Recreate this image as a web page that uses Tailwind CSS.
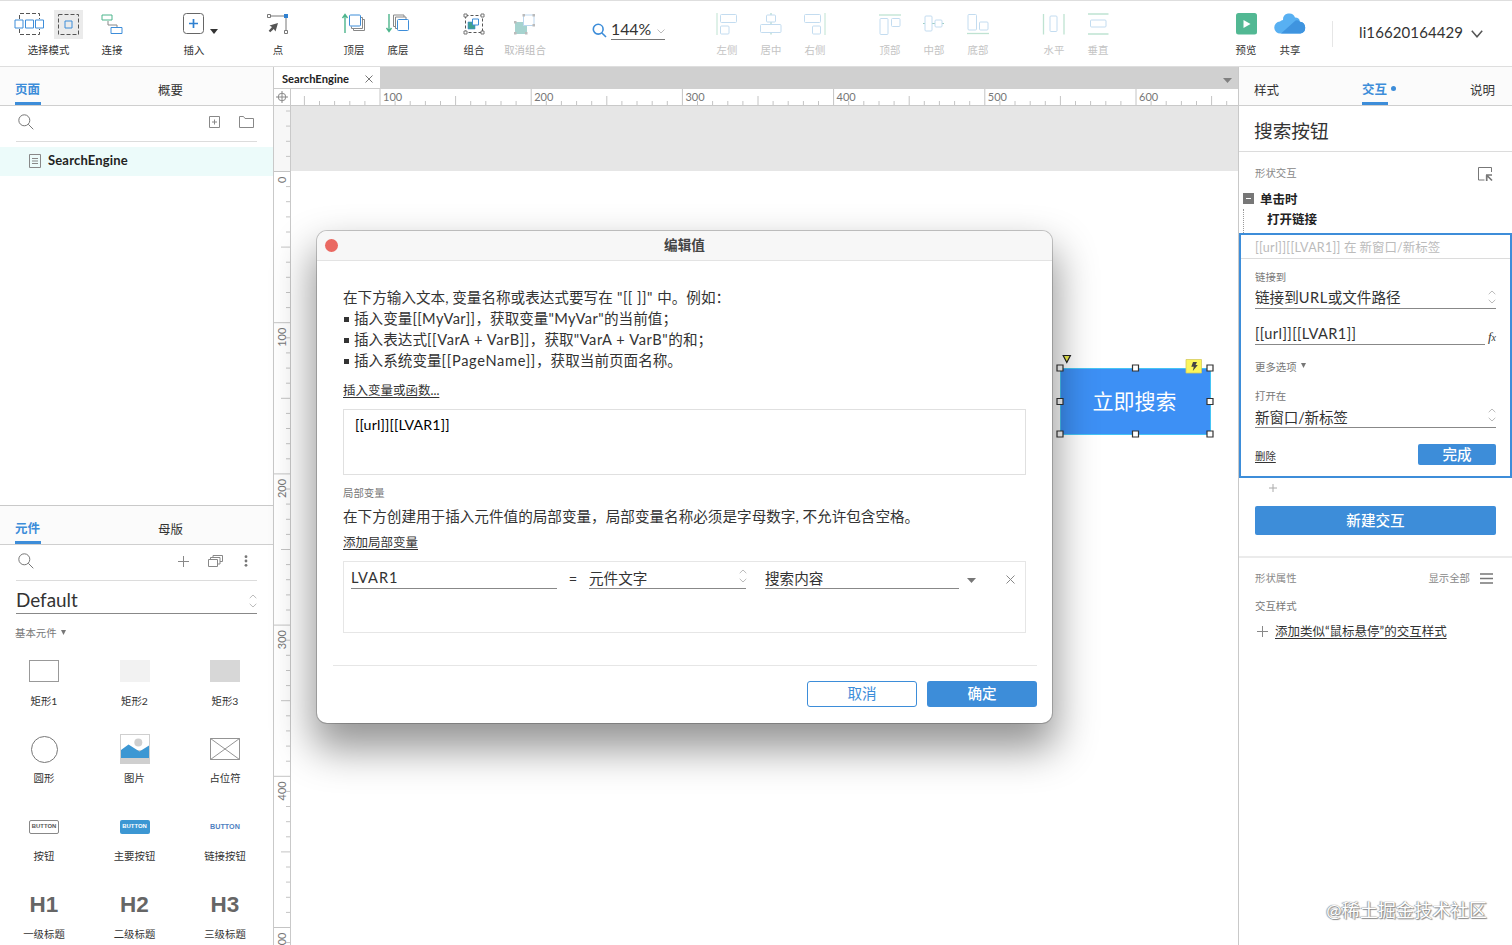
<!DOCTYPE html>
<html lang="zh-CN">
<head>
  <meta charset="UTF-8" />
  <meta name="viewport" content="width=device-width, initial-scale=1.0" />
  <title>SearchEngine</title>
  <script src="https://cdn.jsdelivr.net/npm/@tailwindcss/browser@4"></script>
</head>
<body class="w-[1512px] h-[945px] overflow-hidden bg-white text-[#333] font-['Lato','Noto_Sans_CJK_SC',sans-serif] flex flex-col relative whitespace-nowrap leading-none">

<!-- Shared icons -->
<svg class="hidden">
  <symbol id="search" viewBox="0 0 16 16"><circle cx="6.3" cy="6.3" r="5.5" fill="none" stroke="#777" /><path d="M10.3 10.3l5 5" stroke="#777" /></symbol>
  <symbol id="updown" viewBox="0 0 8 14"><path d="M.7 4.2L4 1l3.300 3.200M.7 9.800L4 13l3.300-3.200" fill="none" stroke="#bbb" /></symbol>
</svg>

<!-- Toolbar -->
<header class="h-[67px] shrink-0 flex border-t border-t-[#dedede] border-b border-b-[#dedede] text-[10.4px]">
  <div class="w-[69px] ml-[14px] pt-[8px] flex flex-col items-center">
    <div class="flex w-full justify-between items-center h-[30px]">
      <svg class="w-[31px] h-[24px]" viewBox="0 0 31 24" fill="none"><path d="M5.500 7V1.500h20V7M5.500 17v5.500h20V17" stroke="#555" stroke-dasharray="4 2" /><g stroke="#3d8dd9" fill="#fff"><path d="M1 8h8v8H1zM11.500 8h8v8h-8zM21.500 8h8v8h-8z" /></g></svg>
      <div class="w-[29px] h-[29px] bg-[#ebebeb] flex items-center justify-center">
        <svg class="w-[23px] h-[23px]" viewBox="0 0 23 23" fill="none"><path d="M1.500 1.500h20v20h-20z" stroke="#555" stroke-dasharray="4 2" /><path d="M8 8h7v7H8z" stroke="#3d8dd9" /></svg>
      </div>
    </div>
    <span class="mt-[6px]">选择模式</span>
  </div>
  <div class="w-[44px] ml-[7px] pt-[11px] flex flex-col items-center">
    <svg class="w-[24px] h-[24px]" viewBox="0 0 24 24" fill="none"><path d="M8 9v4h9v3" stroke="#888" /><path d="M2 3h10v5H2z" stroke="#4db58c" /><path d="M11 15.500h11v6H11z" stroke="#3d8dd9" /></svg>
    <span class="mt-[9px]">连接</span>
  </div>
  <div class="w-[44px] ml-[38px] pt-[11px] flex flex-col items-center">
    <svg class="w-[24px] h-[24px]" viewBox="0 0 24 24" fill="none"><rect x="1.500" y="1.500" width="20" height="20" rx="3" stroke="#666" /><path d="M11.500 7v9M7 11.500h9" stroke="#2f80d0" stroke-width="1.700" /></svg>
    <span class="mt-[9px]">插入</span>
  </div>
  <svg class="w-[8px] h-[5px] mt-[28px] -ml-[6px]" viewBox="0 0 8 5"><path d="M0 0h8L4 5z" fill="#333" /></svg>
  <div class="w-[44px] ml-[38px] pt-[11px] flex flex-col items-center">
    <svg class="w-[24px] h-[24px]" viewBox="0 0 24 24" fill="none"><path d="M4 4h16v15" stroke="#777" /><path d="M1.500 2.500h3v3h-3zM18.500 18.500h3v3h-3z" fill="#fff" stroke="#777" /><path d="M18 2h4v4h-4z" fill="#2f80d0" /><path d="M12 11l-8.500 2.500 2.500 1.500-3.300 3.800 1.500 1.500L7.800 17l1.700 2.500z" fill="#555" /></svg>
    <span class="mt-[9px]">点</span>
  </div>
  <div class="w-[44px] ml-[32px] pt-[11px] flex flex-col items-center">
    <svg class="w-[24px] h-[24px]" viewBox="0 0 24 24" fill="none"><path d="M3 21V3M.5 6L3 2.500 5.500 6" stroke="#4db58c" stroke-width="1.400" /><path d="M11.500 16.500v2H22.500V7.500H21M9.500 14.500v2h11V5.500H19" stroke="#888" /><rect x="7.500" y="3" width="11" height="11" rx="1" fill="#fff" stroke="#3d8dd9" /></svg>
    <span class="mt-[9px]">顶层</span>
  </div>
  <div class="w-[44px] pt-[11px] flex flex-col items-center">
    <svg class="w-[24px] h-[24px]" viewBox="0 0 24 24" fill="none"><path d="M3 2v18M.5 16L3 19.500 5.500 16" stroke="#4db58c" stroke-width="1.400" /><path d="M9 14.500H7.500V3H18v2M11 16.500H9.500V5H20v2" stroke="#888" /><rect x="11.500" y="7.500" width="11" height="11" rx="1" fill="#fff" stroke="#3d8dd9" /></svg>
    <span class="mt-[9px]">底层</span>
  </div>
  <div class="w-[44px] ml-[32px] pt-[11px] flex flex-col items-center">
    <svg class="w-[24px] h-[24px]" viewBox="0 0 24 24" fill="none"><path d="M3.500 3.500h17v17h-17z" stroke="#555" stroke-dasharray="3 2" /><g fill="#fff" stroke="#777"><path d="M2 2h3v3H2zM19 2h3v3h-3zM2 19h3v3H2zM19 19h3v3h-3z" /></g><path d="M6 10h7v7H6z" fill="#3fa08f" stroke="#3d8dd9" stroke-width=".6" /><path d="M10.500 7h6v6h-6z" fill="#fff" stroke="#3d8dd9" /></svg>
    <span class="mt-[9px]">组合</span>
  </div>
  <div class="w-[44px] ml-[7px] pt-[11px] flex flex-col items-center text-[#bbb]">
    <svg class="w-[24px] h-[24px]" viewBox="0 0 24 24" fill="none"><path d="M2 10h12v12H2z" fill="#a6d3cf" /><path d="M10.500 3h10.500v10.500H10.500z" fill="#fff" stroke="#bcd7ef" /><path d="M9.500 2h2.500v2.500H9.500zM19.500 2H22v2.500h-2.500zM19.500 12H22v2.500h-2.500zM1 9h2.500v2.500H1zM1 20h2.500v2.500H1zM12 20h2.500v2.500H12z" fill="#bbb" /></svg>
    <span class="mt-[9px]">取消组合</span>
  </div>
  <!-- Zoom -->
  <div class="ml-[45px] pt-[17px] flex">
    <svg class="w-[15px] h-[15px] mt-[5px]" viewBox="0 0 15 15" fill="none" stroke="#3d8dd9" stroke-width="1.600"><circle cx="6.200" cy="6.200" r="4.900" /><path d="M9.700 9.700l4.300 4.300" /></svg>
    <div class="w-[54px] h-[22px] ml-[4px] border-b border-[#777] flex items-center justify-between text-[15.800px]">
      <span>144%</span>
      <svg class="w-[8px] h-[5px] mt-[6px]" viewBox="0 0 8 5" fill="none" stroke="#bbb"><path d="M.5.5L4 4 7.500.5" /></svg>
    </div>
  </div>
  <!-- Align -->
  <div class="flex ml-[40px] text-[#c4c4c4]">
    <div class="w-[44px] pt-[11px] flex flex-col items-center">
      <svg class="w-[24px] h-[24px]" viewBox="0 0 24 24" fill="none" stroke="#c3dcf0"><path d="M2 1v22" stroke="#bfe3d2" /><rect x="5.500" y="2.500" width="16" height="8" rx="1" /><rect x="5.500" y="14" width="8.500" height="8" rx="1" /></svg>
      <span class="mt-[9px]">左侧</span>
    </div>
    <div class="w-[44px] pt-[11px] flex flex-col items-center">
      <svg class="w-[24px] h-[24px]" viewBox="0 0 24 24" fill="none" stroke="#c3dcf0"><path d="M12 1v2M12 10v2.500M12 20.500v2" stroke="#9ccfc0" /><rect x="7.500" y="3" width="9" height="7" rx="1" /><rect x="1.500" y="12.500" width="20.500" height="8" rx="1" /></svg>
      <span class="mt-[9px]">居中</span>
    </div>
    <div class="w-[44px] pt-[11px] flex flex-col items-center">
      <svg class="w-[24px] h-[24px]" viewBox="0 0 24 24" fill="none" stroke="#c3dcf0"><path d="M22 1v22" stroke="#bfe3d2" /><rect x="1.500" y="2.500" width="16" height="8" rx="1" /><rect x="9.500" y="14" width="8" height="8" rx="1" /></svg>
      <span class="mt-[9px]">右侧</span>
    </div>
  </div>
  <div class="flex ml-[31px] text-[#c4c4c4]">
    <div class="w-[44px] pt-[11px] flex flex-col items-center">
      <svg class="w-[24px] h-[24px]" viewBox="0 0 24 24" fill="none" stroke="#c3dcf0"><path d="M1 3h22" stroke="#bfe3d2" stroke-width="1.300" /><rect x="2" y="6.500" width="8" height="16" rx="1" /><rect x="13.500" y="6.500" width="8.500" height="8" rx="1" /></svg>
      <span class="mt-[9px]">顶部</span>
    </div>
    <div class="w-[44px] pt-[11px] flex flex-col items-center">
      <svg class="w-[24px] h-[24px]" viewBox="0 0 24 24" fill="none" stroke="#c3dcf0"><path d="M1 11.500h2M10 11.500h3M20 11.500h2" stroke="#9ccfc0" /><rect x="3" y="4" width="7" height="15" rx="1" /><rect x="13" y="8" width="7" height="7" rx="1" /></svg>
      <span class="mt-[9px]">中部</span>
    </div>
    <div class="w-[44px] pt-[11px] flex flex-col items-center">
      <svg class="w-[24px] h-[24px]" viewBox="0 0 24 24" fill="none" stroke="#c3dcf0"><path d="M1 21.500h22" stroke="#bfe3d2" stroke-width="1.300" /><rect x="2" y="2.500" width="8.500" height="15.500" rx="1" /><rect x="13.500" y="10" width="8.500" height="8" rx="1" /></svg>
      <span class="mt-[9px]">底部</span>
    </div>
  </div>
  <div class="flex ml-[32px] text-[#c4c4c4]">
    <div class="w-[44px] pt-[11px] flex flex-col items-center">
      <svg class="w-[24px] h-[24px]" viewBox="0 0 24 24" fill="none" stroke="#c3dcf0"><path d="M1.500 2v20.500M22 2v20.500" stroke="#bfe3d2" stroke-width="1.300" /><rect x="8" y="4" width="7" height="15.500" rx="1" /></svg>
      <span class="mt-[9px]">水平</span>
    </div>
    <div class="w-[44px] pt-[11px] flex flex-col items-center">
      <svg class="w-[24px] h-[24px]" viewBox="0 0 24 24" fill="none" stroke="#c3dcf0"><path d="M2 2h20.500M2 22h20.500" stroke="#bfe3d2" stroke-width="1.300" /><rect x="4.500" y="8" width="15.500" height="7" rx="1" /></svg>
      <span class="mt-[9px]">垂直</span>
    </div>
  </div>
  <div class="w-[44px] ml-[104px] pt-[12px] flex flex-col items-center">
    <svg class="w-[21px] h-[22px]" viewBox="0 0 21 22"><rect width="21" height="21.500" rx="2.500" fill="#52b893" /><path d="M7.500 7l7 4-7 4z" fill="#fff" /></svg>
    <span class="mt-[10px]">预览</span>
  </div>
  <div class="w-[44px] pt-[11px] flex flex-col items-center">
    <svg class="w-[32px] h-[22px]" viewBox="0 0 32 22"><path d="M6.500 21.500a6 6 0 01-.5-12 6 6 0 013-1.500 6.200 6.200 0 0112-2.500 5 5 0 015 4.200 6 6 0 01.5 11.800z" fill="#58b0f2" /><path d="M7 21.500L21.500 8.500a5 5 0 014.500 1.200 6 6 0 01.5 11.800z" fill="#3f94df" /></svg>
    <span class="mt-[11px]">共享</span>
  </div>
  <div class="w-px h-[26px] mt-[20px] ml-[20px] bg-[#e6e6e6]"></div>
  <div class="ml-[26px] mt-[21px] h-[20px] flex items-center text-[15px] tracking-[0.1px]">li16620164429
    <svg class="w-[12px] h-[8px] ml-[8px] mt-[3px]" viewBox="0 0 12 8" fill="none" stroke="#555" stroke-width="1.500"><path d="M.8.8L6 6.800 11.200.8" /></svg>
  </div>
</header>

<main class="flex-1 min-h-0 flex">

  <!-- Pages and widgets -->
  <aside class="w-[274px] shrink-0 border-r border-[#c9c9c9] flex flex-col overflow-hidden">
    <div class="h-[39px] shrink-0 bg-[#fbfbfb] border-b border-[#cfcfcf] flex pl-[15px] text-[12.5px]">
      <div class="w-[26px] pt-[11px] border-b-3 border-[#3d8dd9] text-[#3d8dd9] font-bold flex items-center">页面</div>
      <div class="ml-[117px] pt-[10px] flex items-center">概要</div>
    </div>
    <div class="h-[36px] shrink-0 mx-4 pb-[3px] border-b border-[#dcdcdc] flex items-center">
      <svg class="w-[16px] h-[16px] ml-[2px]"><use href="#search" /></svg>
      <svg class="w-[11px] h-[12px] ml-auto" viewBox="0 0 11 12" fill="none" stroke="#888"><path d="M.5.5h10v11H.5zM3 6h5M5.500 3.500v5" /></svg>
      <svg class="w-[15px] h-[12px] ml-[19px] mr-[3px]" viewBox="0 0 15 12" fill="none" stroke="#888"><path d="M.5 11.500V.5h4l1.500 2h8.500v9z" /></svg>
    </div>
    <div class="h-[29px] shrink-0 mt-[5px] pb-[2px] bg-[#ecfbfa] flex items-center pl-[29px] text-[13px] tracking-[0.16px] font-bold text-[#222]">
      <svg class="w-[12px] h-[14px] mr-[7px]" viewBox="0 0 12 14" fill="none" stroke="#888"><path d="M.5.5h11v13H.5zM3 4.500h6M3 7h6M3 9.500h6" /></svg>
      SearchEngine
    </div>
    <div class="flex-1"></div>

    <div class="h-[440px] shrink-0 border-t border-[#c9c9c9]">
      <div class="h-[39px] bg-[#fbfbfb] border-b border-[#cfcfcf] flex pl-[15px] text-[12.5px]">
        <div class="w-[26px] pt-[11px] border-b-3 border-[#3d8dd9] text-[#3d8dd9] font-bold flex items-center">元件</div>
        <div class="ml-[117px] pt-[10px] flex items-center">母版</div>
      </div>
      <div class="h-[36px] mx-4 pb-[3px] border-b border-[#dcdcdc] flex items-center">
        <svg class="w-[16px] h-[16px] ml-[2px]"><use href="#search" /></svg>
        <svg class="w-[11px] h-[11px] ml-auto" viewBox="0 0 11 11" stroke="#888"><path d="M0 5.500h11M5.500 0v11" /></svg>
        <svg class="w-[15px] h-[12px] ml-[19px]" viewBox="0 0 15 12" fill="none" stroke="#888"><path d="M.5 4.500h9v7h-9zM2.500 4.500v-2h9.500v6.500h-2.500M5 2.500v-2h9.500v6h-2.500" /></svg>
        <svg class="w-[4px] h-[12px] ml-[21px] mr-[9px]" viewBox="0 0 4 12" fill="#777"><circle cx="2" cy="1.700" r="1.400" /><circle cx="2" cy="6" r="1.400" /><circle cx="2" cy="10.300" r="1.400" /></svg>
      </div>
      <div class="h-[33px] mx-4 border-b border-[#888] flex items-center justify-between pt-[7px] text-[18.900px]">
        Default
        <svg class="w-[8px] h-[14px]"><use href="#updown" /></svg>
      </div>
      <div class="h-[41px] pl-[15px] flex items-start pt-[14px] text-[10.4px] text-[#777]">基本元件<svg class="w-[5px] h-[5px] mt-[2px] ml-[4px]" viewBox="0 0 5 5"><path d="M0 0h5L2.500 5z" fill="#777" /></svg></div>
      <div class="grid grid-cols-[88px_93px_88px] auto-rows-[78px] text-[10.4px] text-center text-[#333]">
        <div><div class="h-[32px] flex items-center justify-center"><div class="w-[30px] h-[22px] border border-[#999]"></div></div><div class="mt-[9px]">矩形1</div></div>
        <div><div class="h-[32px] flex items-center justify-center"><div class="w-[30px] h-[22px] bg-[#f2f2f2]"></div></div><div class="mt-[9px]">矩形2</div></div>
        <div><div class="h-[32px] flex items-center justify-center"><div class="w-[30px] h-[22px] bg-[#d7d7d7]"></div></div><div class="mt-[9px]">矩形3</div></div>
        <div><div class="h-[32px] flex items-center justify-center"><div class="w-[27px] h-[27px] border border-[#777] rounded-full"></div></div><div class="mt-[8px]">圆形</div></div>
        <div>
          <div class="h-[32px] flex items-center justify-center">
            <svg class="w-[30px] h-[30px]" viewBox="0 0 30 30"><path d="M0 0h30v30H0z" fill="#cfcfcf" /><path d="M1 1h28v15H1z" fill="#fff" /><circle cx="18.300" cy="8.500" r="4" fill="#cfcfcf" /><path d="M1 16L8.500 10.500 19.500 17.500 29 11.500V24H1z" fill="#3c97d3" /></svg>
          </div>
          <div class="mt-[8px]">图片</div>
        </div>
        <div>
          <div class="h-[32px] flex items-center justify-center">
            <svg class="w-[30px] h-[22px]" viewBox="0 0 30 22" fill="none" stroke="#888"><path d="M.5.5h29v21H.5zM.5.5l29 21M29.500.5l-29 21" stroke-width=".9" /></svg>
          </div>
          <div class="mt-[8px]">占位符</div>
        </div>
        <div><div class="h-[32px] flex items-center justify-center"><div class="w-[30px] h-[14px] rounded-[2px] border border-[#888] flex items-center justify-center font-['Liberation_Sans'] font-bold text-[5.900px] text-[#555]">BUTTON</div></div><div class="mt-[8px]">按钮</div></div>
        <div><div class="h-[32px] flex items-center justify-center"><div class="w-[30px] h-[14px] rounded-[2px] bg-[#3c97d3] flex items-center justify-center font-['Liberation_Sans'] font-bold text-[5.900px] text-white">BUTTON</div></div><div class="mt-[8px]">主要按钮</div></div>
        <div><div class="h-[32px] pb-px flex items-center justify-center font-['Liberation_Sans'] font-bold text-[7.200px] text-[#4e7fbf]">BUTTON</div><div class="mt-[8px]">链接按钮</div></div>
        <div><div class="h-[32px] flex items-center justify-center font-['Liberation_Sans'] font-bold text-[22.500px] text-[#666]">H1</div><div class="mt-[8px]">一级标题</div></div>
        <div><div class="h-[32px] flex items-center justify-center font-['Liberation_Sans'] font-bold text-[22.500px] text-[#666]">H2</div><div class="mt-[8px]">二级标题</div></div>
        <div><div class="h-[32px] flex items-center justify-center font-['Liberation_Sans'] font-bold text-[22.500px] text-[#666]">H3</div><div class="mt-[8px]">三级标题</div></div>
      </div>
    </div>
  </aside>

  <!-- Canvas -->
  <section class="w-[964px] shrink-0 flex flex-col overflow-hidden">
    <div class="h-[22px] shrink-0 bg-[#d0d0d0] flex">
      <div class="w-[106px] bg-white border-b border-[#ccc] flex items-center pl-[8px] pt-[2px] text-[11.200px] font-bold text-[#222]">
        SearchEngine
        <svg class="w-[8px] h-[8px] ml-auto mr-[7px]" viewBox="0 0 8 8" stroke="#777"><path d="M.5.5l7 7M7.500.5l-7 7" /></svg>
      </div>
      <svg class="w-[9px] h-[5px] ml-auto mr-[6px] mt-[11px]" viewBox="0 0 9 5"><path d="M0 0h9L4.500 5z" fill="#808080" /></svg>
    </div>
    <div class="h-[17px] shrink-0 flex border-b border-[#c9c9c9]">
      <div class="w-[17px] border-r border-[#c9c9c9] flex items-center justify-center">
        <svg class="w-[12px] h-[12px]" viewBox="0 0 12 12" fill="none" stroke="#888"><circle cx="6" cy="6" r="3.800" /><path d="M0 6h12M6 0v12" /></svg>
      </div>
      <svg id="ruler-x" class="w-[947px] h-[16px] text-[11px]"></svg>
    </div>
    <div class="flex-1 flex">
      <div class="w-[17px] border-r border-[#c9c9c9] bg-[linear-gradient(#f7f7f7_65px,#fff_65px)]">
        <svg id="ruler-y" class="w-[16px] h-[839px] text-[11px]"></svg>
      </div>
      <div class="flex-1 bg-[linear-gradient(#e6e6e6_65px,#fff_65px)] relative">
        <div class="absolute left-[769px] top-[262px] w-[151px] h-[67px] pb-[3px] pr-[2px] bg-[#3d90f5] border border-[#45c4f5] flex items-center justify-center text-white text-[21px]">立即搜索</div>
        <svg class="absolute left-[760px] top-[246px] w-[170px] h-[90px]" viewBox="0 0 170 90">
          <g fill="#fff" stroke="#333" stroke-width="1.200">
            <path d="M6 13h6v6H6zM81.500 13h6v6h-6zM156 13h6v6h-6zM6 46.500h6v6H6zM156 46.500h6v6h-6zM6 79h6v6H6zM81.500 79h6v6h-6zM156 79h6v6h-6z" />
          </g>
          <path d="M12.200 3.500h7.200l-3.600 7z" fill="#f1f04f" stroke="#222" stroke-width="1.200" />
          <path d="M135 7.500h15.500V21H135z" fill="#fbf65a" stroke="#d5cc60" stroke-width=".8" />
          <path d="M142 10h4l-1.500 3h2.300l-5 6 1-4.300h-2.500z" fill="#444" />
        </svg>
      </div>
    </div>
  </section>

  <!-- Interactions -->
  <aside class="w-[274px] shrink-0 border-l border-[#c9c9c9] relative">
    <div class="h-[39px] bg-[#fbfbfb] border-b border-[#cfcfcf] flex pl-[15px] text-[12.5px]">
      <div class="pt-[10px] flex items-center">样式</div>
      <div class="w-[26px] ml-[83px] pt-[11px] border-b-3 border-[#3d8dd9] text-[#3d8dd9] font-bold flex items-center">交互</div>
      <div class="size-[5px] rounded-full bg-[#3d8dd9] ml-[3px] mt-[19px]"></div>
      <div class="ml-auto mr-[17px] pt-[10px] flex items-center">说明</div>
    </div>
    <div class="h-[46px] border-b border-[#dcdcdc] pl-[15px] pt-[5px] flex items-center text-[18.700px]">搜索按钮</div>
    <div class="h-[37px] pl-4 pr-[19px] pt-[6px] flex items-center justify-between text-[10.4px] text-[#888]">
      形状交互
      <svg class="w-[16px] h-[16px]" viewBox="0 0 16 16" fill="none" stroke="#777"><path d="M14.500 6V1.500H1.500V14H7.500" /><path d="M9 9h6M9.700 9v6M10 9.500l5 5" stroke-width="1.700" /></svg>
    </div>
    <div class="h-[20px] pl-[4px] flex items-center text-[12.500px] font-bold text-[#222]">
      <svg class="w-[11px] h-[11px] mr-[6px] -mt-px" viewBox="0 0 11 11"><path d="M0 0h11v11H0z" fill="#777" /><path d="M3 5.500h5" stroke="#fff" /></svg>
      <span class="mt-[2px]">单击时</span>
    </div>
    <div class="h-[24px] ml-[4px] border-l border-dotted border-[#999] pl-[23px] pt-[5px] text-[12.500px] font-bold text-[#222]">打开链接</div>
    <div class="h-[245px] border-2 border-[#3d8dd9] text-[14.600px]">
      <div class="h-[24px] px-[14px] pt-[4px] border-b border-[#dcdcdc] flex items-center text-[12.500px] text-[#bbb]"><span class="tracking-[0.27px]">[[url]][[LVAR1]]</span>&nbsp;在 新窗口/新标签</div>
      <div class="h-[29px] px-[14px] flex items-center pt-[7px] text-[10.4px] text-[#777]">链接到</div>
      <div class="h-[21px] mx-[14px] pt-px border-b border-[#888] flex items-center justify-between"><span>链接到<span class="tracking-[0.5px]">URL</span>或文件路径</span><svg class="w-[8px] h-[14px] mb-[4px]"><use href="#updown" /></svg></div>
      <div class="h-[36px] mx-[14px] flex items-end justify-between">
        <div class="w-[230px] h-[22px] pt-px border-b border-[#888] flex items-center tracking-[0.4px]">[[url]][[LVAR1]]</div>
        <span class="font-['Liberation_Serif'] italic text-[13px] mb-[2px]">f<span class="text-[10px]">x</span></span>
      </div>
      <div class="h-[43px] px-[14px] flex items-center pt-px text-[10.4px] text-[#777]">更多选项<svg class="w-[5px] h-[5px] ml-[4px] mb-[3px]" viewBox="0 0 5 5"><path d="M0 0h5L2.500 5z" fill="#777" /></svg></div>
      <div class="h-[17px] px-[14px] flex items-center text-[10.4px] text-[#777]">打开在</div>
      <div class="h-[23px] mx-[14px] pt-[4px] border-b border-[#888] flex items-center justify-between"><span class="tracking-[-0.2px]">新窗口/新标签</span><svg class="w-[8px] h-[14px] mb-[6px]"><use href="#updown" /></svg></div>
      <div class="h-[37px] mx-[14px] pt-[16px] flex justify-between">
        <span class="text-[10.4px] underline underline-offset-2 mt-[7px]">删除</span>
        <div class="w-[78px] h-[21px] pt-px rounded-[2px] bg-[#3d8dd9] text-white flex items-center justify-center font-medium">完成</div>
      </div>
    </div>
    <div class="h-[28px] pl-[30px] pt-[6px]"><svg class="w-[8px] h-[8px]" viewBox="0 0 8 8" stroke="#aaa"><path d="M0 4h8M4 0v8" /></svg></div>
    <button class="block w-[241px] h-[29px] ml-4 pt-[2px] rounded-[2px] bg-[#3d8dd9] text-white text-[14.600px] font-medium leading-none">新建交互</button>
    <div class="mt-[21px] border-t-2 border-[#ebebeb] h-[35px] pl-4 pr-[19px] pt-[7px] flex items-center text-[10.4px] text-[#888]">
      形状属性
      <span class="ml-auto">显示全部</span>
      <svg class="w-[13px] h-[11px] ml-[10px]" viewBox="0 0 13 11" stroke="#777" stroke-width="1.500"><path d="M0 1h13M0 5.500h13M0 10h13" /></svg>
    </div>
    <div class="h-[28px] pl-4 pt-[2px] flex items-center text-[10.4px] text-[#777]">交互样式</div>
    <div class="h-[24px] pl-[18px] flex items-center text-[12.500px]">
      <svg class="w-[11px] h-[11px] mr-[7px]" viewBox="0 0 11 11" stroke="#888"><path d="M0 5.500h11M5.500 0v11" /></svg>
      <span class="mt-[3px] underline underline-offset-2">添加类似“鼠标悬停”的交互样式</span>
    </div>
    <div class="absolute right-[25px] bottom-[26px] text-[18.200px] text-white [text-shadow:0_0_1px_#777,1px_1px_1px_#888,-1px_0_1px_#aaa]">@稀土掘金技术社区</div>
  </aside>
</main>

<!-- Edit value dialog -->
<div class="absolute left-[317px] top-[231px] w-[735px] h-[492px] rounded-[10px] bg-white overflow-hidden text-[14.600px] [box-shadow:0_0_0_1px_rgba(0,0,0,0.2),0_22px_40px_4px_rgba(0,0,0,0.42)]">
  <div class="h-[30px] bg-[#f7f7f7] border-b border-[#e3e3e3] flex items-center">
    <div class="size-[13px] rounded-full bg-[#ea6962] ml-[8px]"></div>
    <div class="flex-1 pr-[21px] text-center text-[13.600px] font-bold text-[#444]">编辑值</div>
  </div>
  <div class="pl-[26px] pr-[26px] pt-[26px]">
    <div class="leading-[21px]">
      <p>在下方输入文本, 变量名称或表达式要写在<span class="tracking-[0.5px]"> "[[ ]]" </span>中。例如：</p>
      <p class="flex items-center"><span class="size-[5px] bg-[#333] ml-px mr-[5px] mt-[2px]"></span>插入变量<span class="tracking-[0.4px]">[[MyVar]]</span>，获取变量<span class="tracking-[0.4px]">"MyVar"</span>的当前值；</p>
      <p class="flex items-center"><span class="size-[5px] bg-[#333] ml-px mr-[5px] mt-[2px]"></span>插入表达式<span class="tracking-[0.6px]">[[VarA + VarB]]</span>，获取<span class="tracking-[0.6px]">"VarA + VarB"</span>的和；</p>
      <p class="flex items-center"><span class="size-[5px] bg-[#333] ml-px mr-[5px] mt-[2px]"></span>插入系统变量<span class="tracking-[0.7px]">[[PageName]]</span>，获取当前页面名称。</p>
    </div>
    <div class="h-[38px] pt-[2px] flex items-center text-[12.500px]"><span class="underline underline-offset-2">插入变量或函数...</span></div>
    <div class="w-[683px] h-[66px] border border-[#e0e0e0] pl-[11px] pt-[8px] text-[14.200px] tracking-[0.15px] text-black">[[url]][[LVAR1]]</div>
    <div class="h-[30px] flex items-center pt-[6px] text-[10.4px] text-[#777]">局部变量</div>
    <div class="h-[24px] flex items-center">在下方创建用于插入元件值的局部变量，局部变量名称必须是字母数字, 不允许包含空格。</div>
    <div class="h-[32px] flex items-start pt-[8px] text-[12.500px]"><span class="underline underline-offset-2">添加局部变量</span></div>
    <div class="w-[683px] h-[72px] border border-[#e6e6e6] pl-[7px] pt-[5px] flex items-start">
      <div class="w-[206px] h-[22px] pt-px border-b border-[#888] flex items-center tracking-[0.9px]">LVAR1</div>
      <span class="w-[32px] h-[26px] flex items-center justify-center">=</span>
      <div class="w-[157px] h-[22px] pt-[3px] border-b border-[#888] flex items-center justify-between">元件文字<svg class="w-[8px] h-[14px] -mr-px mb-[6px]"><use href="#updown" /></svg></div>
      <div class="w-[194px] h-[22px] pt-[3px] ml-[19px] border-b border-[#888] flex items-center">搜索内容</div>
      <svg class="w-[9px] h-[5px] ml-[8px] mt-[11px]" viewBox="0 0 9 5"><path d="M0 0h9L4.500 5z" fill="#777" /></svg>
      <svg class="w-[9px] h-[9px] ml-[30px] mt-[8px]" viewBox="0 0 9 9" stroke="#888"><path d="M.5.5l8 8M8.500.5l-8 8" /></svg>
    </div>
  </div>
  <div class="ml-4 mr-[15px] mt-[32px] border-t border-[#e6e6e6] pt-[15px] flex justify-end gap-[10px]">
    <button class="w-[110px] h-[26px] rounded-[3px] border border-[#3d8dd9] text-[#3d8dd9]">取消</button>
    <button class="w-[110px] h-[26px] rounded-[3px] bg-[#3d8dd9] text-white font-medium">确定</button>
  </div>
</div>

<script>
// 100 units are 151.2px wide at 144% zoom
const STEP = 15.12;
function drawRuler(id, origin, from, to, length, vertical) {
  let out = '';
  for (let i = from; i <= to; i++) {
    const p = (origin + i * STEP).toFixed(1);
    const start = i % 10 === 0 ? 0 : i % 5 === 0 ? 7 : 12;
    if (p < 0 || p > length) continue;
    out += vertical
      ? `<path d="M${start} ${p}H16" stroke="#c4c4c4"/>`
      : `<path d="M${p} ${start}V16" stroke="#c4c4c4"/>`;
    if (i % 10 === 0) {
      out += vertical
        ? `<text transform="translate(12 ${+p + 5}) rotate(-90)" text-anchor="end" fill="#777">${i * 10}</text>`
        : `<text x="${+p + 3}" y="12" fill="#777">${i * 10}</text>`;
    }
  }
  document.getElementById(id).innerHTML = out;
}
drawRuler('ruler-x', -62.2, 0, 68, 947, false);
drawRuler('ruler-y', 65.5, -4, 52, 839, true);
</script>

</body>
</html>
